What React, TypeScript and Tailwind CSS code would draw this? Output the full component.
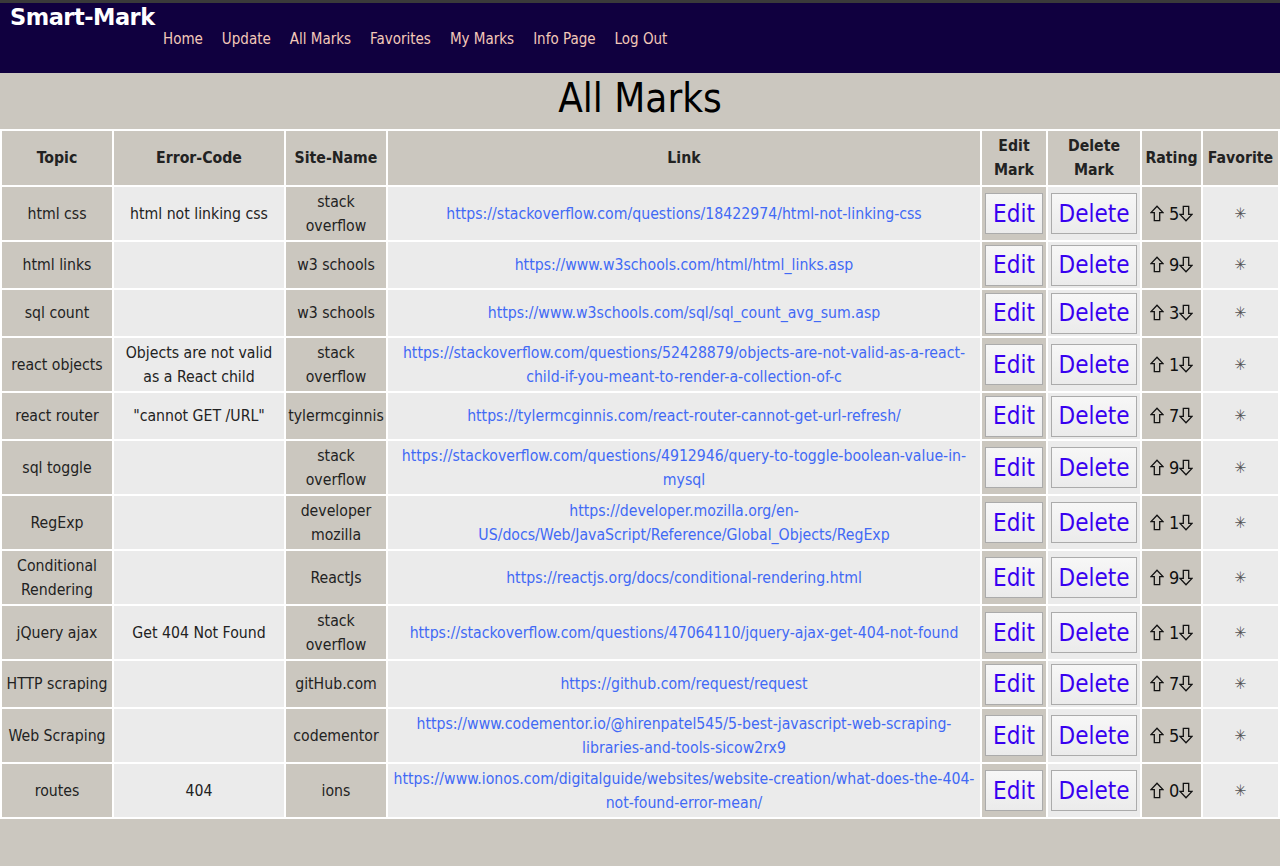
import React from 'react'

type Mark = {
  topic: string
  code: string
  site: string
  link: string
  rating: number
}

const marks: Mark[] = [
  { topic: 'html css', code: 'html not linking css', site: 'stack overflow', link: 'https://stackoverflow.com/questions/18422974/html-not-linking-css', rating: 5 },
  { topic: 'html links', code: '', site: 'w3 schools', link: 'https://www.w3schools.com/html/html_links.asp', rating: 9 },
  { topic: 'sql count', code: '', site: 'w3 schools', link: 'https://www.w3schools.com/sql/sql_count_avg_sum.asp', rating: 3 },
  { topic: 'react objects', code: 'Objects are not valid as a React child', site: 'stack overflow', link: 'https://stackoverflow.com/questions/52428879/objects-are-not-valid-as-a-react-child-if-you-meant-to-render-a-collection-of-c', rating: 1 },
  { topic: 'react router', code: '"cannot GET /URL"', site: 'tylermcginnis', link: 'https://tylermcginnis.com/react-router-cannot-get-url-refresh/', rating: 7 },
  { topic: 'sql toggle', code: '', site: 'stack overflow', link: 'https://stackoverflow.com/questions/4912946/query-to-toggle-boolean-value-in-mysql', rating: 9 },
  { topic: 'RegExp', code: '', site: 'developer mozilla', link: 'https://developer.mozilla.org/en-US/docs/Web/JavaScript/Reference/Global_Objects/RegExp', rating: 1 },
  { topic: 'Conditional Rendering', code: '', site: 'ReactJs', link: 'https://reactjs.org/docs/conditional-rendering.html', rating: 9 },
  { topic: 'jQuery ajax', code: 'Get 404 Not Found', site: 'stack overflow', link: 'https://stackoverflow.com/questions/47064110/jquery-ajax-get-404-not-found', rating: 1 },
  { topic: 'HTTP scraping', code: '', site: 'gitHub.com', link: 'https://github.com/request/request', rating: 7 },
  { topic: 'Web Scraping', code: '', site: 'codementor', link: 'https://www.codementor.io/@hirenpatel545/5-best-javascript-web-scraping-libraries-and-tools-sicow2rx9', rating: 5 },
  { topic: 'routes', code: '404', site: 'ions', link: 'https://www.ionos.com/digitalguide/websites/website-creation/what-does-the-404-not-found-error-mean/', rating: 0 },
]

const navLinks = ['Home', 'Update', 'All Marks', 'Favorites', 'My Marks', 'Info Page', 'Log Out']

const dark = 'bg-[#cbc7bf]'
const light = 'bg-[#ebebeb]'
const btn =
  'border border-[#ababab] bg-gradient-to-b from-[#f7f7f7] to-[#ebebeb] text-[#3800f0] text-[24px] leading-[28px] px-[7px] py-[5.5px]'

const Arrow = ({ down }: { down?: boolean }) => (
  <svg width="14" height="17" viewBox="0 0 14 17" className={`inline-block align-[-2px] ${down ? 'rotate-180' : ''}`}>
    <path d="M7 1.2 L13 7.6 H9.7 V15.6 H4.3 V7.6 H1 Z" fill="none" stroke="#111" strokeWidth="1.3" strokeLinejoin="miter" />
  </svg>
)

const App = () => {
  return (
    <div className="min-h-[866px] bg-[#cbc7bf] text-[#222] font-['DejaVu_Sans_Condensed',sans-serif] text-[15.7px]">
      {/* nav */}
      <div className="h-[73px] bg-[#10003f] border-t-[3px] border-t-[#3a3a3a] px-[10px]">
        <div className="text-white font-bold text-[22.5px] leading-[28px] font-['DejaVu_Sans',sans-serif] tracking-[-0.5px]">Smart-Mark</div>
        <div className="flex gap-[19px] pl-[153px] mt-[-3px] text-[#f3c9b9] text-[15px]">
          {navLinks.map((l) => (
            <a key={l} href="#">{l}</a>
          ))}
        </div>
      </div>

      <h1 className="text-center text-black text-[40px] leading-[50px] pb-[6px]">All Marks</h1>

      <table className="w-full table-fixed border-separate border-spacing-[2px] bg-white text-center leading-[24px]">
        <colgroup>
          <col className="w-[110px]" />
          <col className="w-[170px]" />
          <col className="w-[100px]" />
          <col />
          <col className="w-[64px]" />
          <col className="w-[92px]" />
          <col className="w-[59px]" />
          <col className="w-[75px]" />
        </colgroup>
        <thead>
          <tr className={`${dark} font-bold h-[54px]`}>
            <th>Topic</th>
            <th>Error-Code</th>
            <th>Site-Name</th>
            <th>Link</th>
            <th>Edit Mark</th>
            <th>Delete Mark</th>
            <th>Rating</th>
            <th>Favorite</th>
          </tr>
        </thead>
        <tbody>
          {marks.map((m, i) => (
            <tr key={i}>
              <td className={`${dark} px-[2px] py-[2.5px]`}>{m.topic}</td>
              <td className={`${light} px-[4px] py-[2.5px]`}>{m.code}</td>
              <td className={`${dark} px-[1px] py-[2.5px]`}>{m.site}</td>
              <td className={`${light} px-[4px] py-[2.5px] break-words`}>
                <a href="#" className="text-[#4169f5]">{m.link}</a>
              </td>
              <td className={`${dark} py-[2.5px]`}>
                <button className={btn}>Edit</button>
              </td>
              <td className={`${light} py-[2.5px]`}>
                <button className={btn}>Delete</button>
              </td>
              <td className={`${dark} py-[2.5px] whitespace-nowrap text-[18px] text-[#111]`}>
                <Arrow /> <span>{m.rating}</span><Arrow down />
              </td>
              <td className={`${light} py-[2.5px] text-[#555]`}>✳︎</td>
            </tr>
          ))}
        </tbody>
      </table>
    </div>
  )
}

export default App
